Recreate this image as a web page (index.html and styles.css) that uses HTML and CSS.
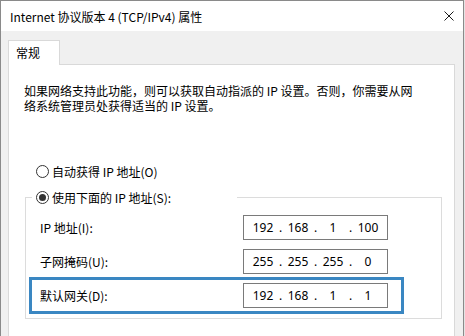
FILE: index.html
```html
<!DOCTYPE html>
<html lang="zh-CN">
<head>
<meta charset="utf-8">
<title>Internet 协议版本 4 (TCP/IPv4) 属性</title>
<link rel="stylesheet" href="styles.css">
</head>
<body>
<div class="window">
  <div class="titlebar">
    <span class="title">Internet 协议版本 4 (TCP/IPv4) 属性</span>
    <svg class="close" width="10" height="10" viewBox="0 0 10 10" aria-hidden="true">
      <path d="M0.5 0.5 L9.5 9.5 M9.5 0.5 L0.5 9.5" stroke="#1a1a1a" stroke-width="1" fill="none"/>
    </svg>
  </div>
  <div class="client">
    <div class="tabs">
      <div class="tab">常规</div>
    </div>
    <div class="panel">
      <p class="intro">如果网络支持此功能，则可以获取自动指派的 IP 设置。否则，你需要从网<br>络系统管理员处获得适当的 IP 设置。</p>
      <div class="radio-row auto">
        <span class="radio"></span>
        <span>自动获得 IP 地址(O)</span>
      </div>
      <fieldset class="group">
        <legend class="radio-row">
          <span class="radio checked"></span>
          <span>使用下面的 IP 地址(S):</span>
        </legend>
        <div class="row">
          <span class="label">IP 地址(I):</span>
          <div class="ipbox"><span class="f">192</span><span class="d">.</span><span class="f">168</span><span class="d">.</span><span class="f">1</span><span class="d">.</span><span class="f">100</span></div>
        </div>
        <div class="row">
          <span class="label">子网掩码(U):</span>
          <div class="ipbox"><span class="f">255</span><span class="d">.</span><span class="f">255</span><span class="d">.</span><span class="f">255</span><span class="d">.</span><span class="f">0</span></div>
        </div>
        <div class="row highlight">
          <span class="label">默认网关(D):</span>
          <div class="ipbox"><span class="f">192</span><span class="d">.</span><span class="f">168</span><span class="d">.</span><span class="f">1</span><span class="d">.</span><span class="f">1</span></div>
        </div>
      </fieldset>
    </div>
  </div>
</div>
</body>
</html>
```

FILE: styles.css
```css
html {
  background: #e4e4e4;
}
body {
  margin: 0;
  font-family: "Noto Sans CJK SC", "Noto Sans", sans-serif;
  font-size: 12px;
  color: #000;
}
.window {
  width: 462px;
  height: 335px;
  border: 1px solid #8a8a8a;
  border-bottom: none;
  display: flex;
  flex-direction: column;
  overflow: hidden;
}
.titlebar {
  height: 30px;
  flex: none;
  background: #fff;
  display: flex;
  align-items: center;
  justify-content: space-between;
  padding-left: 9px;
}
.title {
  line-height: 15px;
}
.close {
  margin-right: 9px;
  margin-bottom: 1px;
}
.client {
  flex: 1;
  background: #f0f0f0;
  padding: 9px 8px 0 7px;
  display: flex;
  flex-direction: column;
}
.tabs {
  display: flex;
  flex: none;
}
.tab {
  position: relative;
  z-index: 1;
  width: 52px;
  height: 25px;
  box-sizing: border-box;
  background: #fff;
  border: 1px solid #d9d9d9;
  border-bottom: none;
  margin-bottom: -1px;
  padding-left: 7px;
  line-height: 23px;
}
.panel {
  flex: 1;
  background: #fff;
  border: 1px solid #d9d9d9;
  border-bottom: none;
  padding: 18px 0 0 15px;
}
.intro {
  margin: 0;
  line-height: 15px;
}
.radio-row {
  display: flex;
  align-items: center;
  line-height: 15px;
  height: 15px;
}
.auto {
  margin: 51px 0 0 12px;
}
.radio {
  width: 13px;
  height: 13px;
  box-sizing: border-box;
  border: 1px solid #333;
  border-radius: 50%;
  background: #fff;
  margin-right: 3px;
  display: flex;
  align-items: center;
  justify-content: center;
  flex: none;
}
.radio.checked::after {
  content: "";
  width: 7px;
  height: 7px;
  border-radius: 50%;
  background: #333;
}
.group {
  margin: 11px 0 0 1px;
  width: 417px;
  box-sizing: border-box;
  border: 1px solid #dcdcdc;
  padding: 10px 0 4px 0;
  min-inline-size: 0;
}
.group legend {
  width: 205px;
  box-sizing: border-box;
  margin-left: 6px;
  padding: 0 0 0 4px;
}
.row {
  display: grid;
  grid-template-columns: 203px 145px;
  align-items: center;
  padding-left: 14px;
  height: 25px;
  margin-bottom: 9px;
}
.row.highlight {
  width: 375px;
  height: 37px;
  box-sizing: border-box;
  margin: -6px 0 0 3px;
  padding: 3px 0 3px 8px;
  border: 3px solid #3a87c2;
}
.label {
  line-height: 15px;
}
.ipbox {
  height: 25px;
  box-sizing: border-box;
  border: 1px solid #7a7a7a;
  background: #fff;
  padding-left: 5px;
  display: flex;
  align-items: center;
  font-family: "Noto Sans", "Noto Sans CJK SC", sans-serif;
  line-height: 15px;
}
.ipbox .f {
  width: 28px;
  text-align: center;
}
.ipbox .d {
  width: 7px;
  text-align: center;
}
```
